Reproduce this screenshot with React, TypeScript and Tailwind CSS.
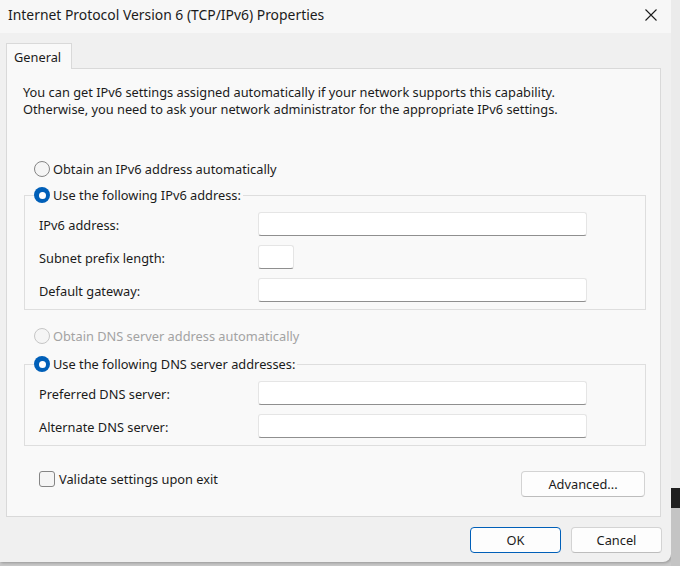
import type { ReactNode } from "react";

function Radio({ checked = false, disabled = false }: { checked?: boolean; disabled?: boolean }) {
  if (checked) {
    return (
      <span className="flex h-[16px] w-[16px] shrink-0 items-center justify-center rounded-full bg-[#005fb8]">
        <span className="h-[7px] w-[7px] rounded-full bg-white" />
      </span>
    );
  }
  return (
    <span
      className={`h-[16px] w-[16px] shrink-0 rounded-full border bg-[#f5f5f5] ${
        disabled ? "border-[#c6c6c6]" : "border-[#858585]"
      }`}
    />
  );
}

function RadioRow({ label, checked, disabled }: { label: string; checked?: boolean; disabled?: boolean }) {
  return (
    <label className="flex h-[16px] items-center gap-[3px] pr-[2px]">
      <Radio checked={checked} disabled={disabled} />
      <span className={disabled ? "text-[#a3a3a3]" : "text-[#1b1b1b]"}>{label}</span>
    </label>
  );
}

function Field({ label, wide = true }: { label: string; wide?: boolean }) {
  return (
    <div className="flex h-[24px] items-center">
      <span className="w-[219px] pt-[2px] text-[#1b1b1b]">{label}</span>
      <input
        type="text"
        className={`h-[24px] rounded-[3px] border border-[#e5e5e5] border-b-[#8f8f8f] bg-white outline-none ${
          wide ? "w-[329px]" : "w-[36px]"
        }`}
      />
    </div>
  );
}

function GroupBox({ legend, children }: { legend: ReactNode; children: ReactNode }) {
  return (
    <fieldset className="ml-[17px] w-[622px] border border-[#dedede] pl-[9px] pb-[7px]">
      <legend className="-mb-[1px]">{legend}</legend>
      <div className="ml-[5px] mt-[10px] flex flex-col gap-[9px]">{children}</div>
    </fieldset>
  );
}

function DialogButton({ children, primary = false }: { children: ReactNode; primary?: boolean }) {
  return (
    <button
      type="button"
      className={`h-[26px] w-[91px] rounded-[4px] border bg-[#fdfdfd] text-[#1b1b1b] ${
        primary ? "border-[#005fb8]" : "border-[#d3d3d3] border-b-[#bdbdbd]"
      }`}
    >
      {children}
    </button>
  );
}

export default function App() {
  return (
    <div className="flex h-[566px] w-[680px] overflow-hidden bg-[#c9c9c9] font-['Segoe_UI','Noto_Sans',sans-serif] text-[12.8px] leading-[16px]">
      {/* dialog window */}
      <div className="flex h-[562px] w-[671px] shrink-0 flex-col rounded-br-[8px] bg-[#f0f0f0] shadow-[1px_1px_3px_rgba(0,0,0,0.25)]">
        {/* title bar */}
        <div className="flex h-[33px] items-center justify-between bg-[#f7f7f7] pb-[3px] pl-[8px] pr-[14px]">
          <span className="text-[13.9px] text-[#1b1b1b]">Internet Protocol Version 6 (TCP/IPv6) Properties</span>
          <svg width="12" height="12" viewBox="0 0 12 12" className="text-[#1b1b1b]">
            <path d="M0.5 0.5 L11.5 11.5 M11.5 0.5 L0.5 11.5" stroke="currentColor" strokeWidth="1.1" fill="none" />
          </svg>
        </div>

        <div className="flex flex-col pl-[6px] pt-[10px]">
          {/* tab strip */}
          <div className="relative z-10 -mb-[1px] flex h-[26px] w-[66px] items-center border border-b-0 border-[#d9d9d9] bg-[#f9f9f9] pl-[7px] text-[#1b1b1b]">
            General
          </div>

          {/* tab panel */}
          <div className="flex h-[449px] w-[655px] flex-col border border-[#d9d9d9] bg-[#f9f9f9]">
            <p className="ml-[16px] mt-[15px] leading-[17px] text-[#1b1b1b]">
              You can get IPv6 settings assigned automatically if your network supports this capability.
              <br />
              Otherwise, you need to ask your network administrator for the appropriate IPv6 settings.
            </p>

            <div className="ml-[27px] mt-[43px]">
              <RadioRow label="Obtain an IPv6 address automatically" />
            </div>

            <div className="mt-[10px]">
              <GroupBox legend={<RadioRow label="Use the following IPv6 address:" checked />}>
                <Field label="IPv6 address:" />
                <Field label="Subnet prefix length:" wide={false} />
                <Field label="Default gateway:" />
              </GroupBox>
            </div>

            <div className="ml-[27px] mt-[18px]">
              <RadioRow label="Obtain DNS server address automatically" disabled />
            </div>

            <div className="mt-[12px]">
              <GroupBox legend={<RadioRow label="Use the following DNS server addresses:" checked />}>
                <Field label="Preferred DNS server:" />
                <Field label="Alternate DNS server:" />
              </GroupBox>
            </div>

            <div className="mt-[25px] flex items-start justify-between pl-[32px] pr-[15px]">
              <label className="flex h-[16px] items-center gap-[4px] text-[#1b1b1b]">
                <span className="h-[16px] w-[16px] rounded-[3px] border border-[#858585] bg-[#f5f5f5]" />
                Validate settings upon exit
              </label>
              <button
                type="button"
                className="h-[26px] w-[124px] rounded-[4px] border border-[#d3d3d3] border-b-[#bdbdbd] bg-[#fdfdfd] text-[#1b1b1b]"
              >
                Advanced...
              </button>
            </div>
          </div>
        </div>

        {/* dialog buttons */}
        <div className="mt-[10px] flex justify-end gap-[10px] pr-[9px]">
          <DialogButton primary>OK</DialogButton>
          <DialogButton>Cancel</DialogButton>
        </div>
      </div>

      {/* desktop behind the dialog */}
      <div className="flex flex-1 flex-col">
        <div className="h-[488px] bg-[#ebebeb]" />
        <div className="h-[20px] bg-[#1f1f1f]" />
        <div className="flex-1 bg-[#c4c4c4]" />
      </div>
    </div>
  );
}
